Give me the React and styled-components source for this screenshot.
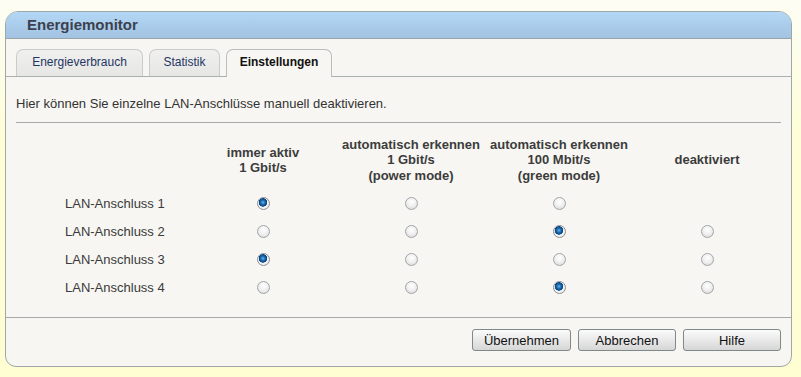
import React from "react";
import styled, { createGlobalStyle } from "styled-components";

const GlobalStyle = createGlobalStyle`
  html, body {
    margin: 0;
    padding: 0;
  }
  body {
    background: linear-gradient(#fdfdf3 0, #fdfdf0 30px, #fffed6 140px, #fffdd2 100%);
    font-family: "Liberation Sans", Arial, sans-serif;
    font-size: 13px;
    color: #333;
  }
`;

const Page = styled.div`
  width: 801px;
  height: 377px;
  box-sizing: border-box;
  padding: 11px 9px 10px 5px;
`;

const Panel = styled.div`
  height: 100%;
  box-sizing: border-box;
  border: 1px solid #9ea8a6;
  border-radius: 13px 13px 11px 11px;
  background: #f7f6f2;
  overflow: hidden;
  display: flex;
  flex-direction: column;
`;

const Header = styled.div`
  height: 26px;
  line-height: 26px;
  padding-left: 21px;
  background: linear-gradient(#b3d7f6, #a2c3e1);
  border-bottom: 1px solid #96a4a8;
  font-size: 15px;
  font-weight: bold;
  color: #3b414e;
`;

const TabBar = styled.div`
  display: flex;
  align-items: flex-end;
  gap: 6px;
  margin-top: 10px;
  height: 27px;
  padding-left: 10px;
  border-bottom: 1px solid #a9b1b0;
`;

const Tab = styled.div`
  width: ${(p) => p.$w}px;
  line-height: 25px;
  box-sizing: border-box;
  text-align: center;
  font-size: 12px;
  border: 1px solid ${(p) => (p.$active ? "#b9bdbc" : "#c9cccb")};
  border-bottom: none;
  border-radius: 7px 7px 0 0;
  margin-bottom: ${(p) => (p.$active ? "-1px" : "0")};
  height: ${(p) => (p.$active ? "28px" : "27px")};
  background: ${(p) => (p.$active ? "#f7f6f2" : "linear-gradient(#f0f0ee, #e6e6e4)")};
  color: ${(p) => (p.$active ? "#111" : "#1f3563")};
  font-weight: ${(p) => (p.$active ? "bold" : "normal")};
`;

const Content = styled.div`
  padding: 0 10px;
  flex: 1;
`;

const Intro = styled.p`
  margin: 20px 0 0;
  line-height: 14px;
  color: #333;
`;

const Rule = styled.div`
  margin-top: 11px;
  border-top: 1px solid #a3aaa9;
`;

const Grid = styled.div`
  display: grid;
  grid-template-columns: 173px repeat(4, 148px);
  grid-template-rows: 58px repeat(4, 28px);
  margin-top: 8px;
  align-items: center;
`;

const ColHead = styled.div`
  text-align: center;
  font-weight: bold;
  line-height: 15.5px;
  color: #3c3c3c;
`;

const RowLabel = styled.div`
  padding-left: 49px;
  color: #3a3a3a;
`;

const Cell = styled.div`
  display: flex;
  justify-content: center;
`;

const Radio = styled.input.attrs({ type: "radio" })`
  appearance: none;
  margin: 0;
  width: 13px;
  height: 13px;
  border-radius: 50%;
  border: 1px solid #a2a5a8;
  box-sizing: border-box;
  background: radial-gradient(circle at 50% 35%, #ffffff 0, #f1f1f1 45%, #d6d6d6 100%);

  &:checked {
    border-color: #8b9196;
    background:
      radial-gradient(circle at 45% 40%, #6fb4ea 0, #1d6fb4 2px, #0b4280 4px, transparent 4.5px),
      radial-gradient(circle, #ffffff 0, #eeeeee 70%, #d2d2d2 100%);
  }
`;

const Footer = styled.div`
  display: flex;
  justify-content: flex-end;
  gap: 7px;
  padding: 11px 10px 15px;
  border-top: 1px solid #a3aaa9;
`;

const Button = styled.button`
  width: ${(p) => p.$w}px;
  height: 22px;
  padding: 0;
  border: 1px solid #7f8988;
  border-radius: 3px;
  background: linear-gradient(#fbfbfb, #e9e9e9 50%, #d6d6d6);
  font-family: "Liberation Sans", Arial, sans-serif;
  font-size: 13px;
  color: #111;
`;

const columns = [
  ["immer aktiv", "1 Gbit/s"],
  ["automatisch erkennen", "1 Gbit/s", "(power mode)"],
  ["automatisch erkennen", "100 Mbit/s", "(green mode)"],
  ["deaktiviert"],
];

const ports = [
  { name: "LAN-Anschluss 1", value: 0, options: [0, 1, 2] },
  { name: "LAN-Anschluss 2", value: 2, options: [0, 1, 2, 3] },
  { name: "LAN-Anschluss 3", value: 0, options: [0, 1, 2, 3] },
  { name: "LAN-Anschluss 4", value: 2, options: [0, 1, 2, 3] },
];

export default function App() {
  return (
    <>
      <GlobalStyle />
      <Page>
        <Panel>
          <Header>Energiemonitor</Header>
          <TabBar>
            <Tab $w={127}>Energieverbrauch</Tab>
            <Tab $w={71}>Statistik</Tab>
            <Tab $w={106} $active>
              Einstellungen
            </Tab>
          </TabBar>
          <Content>
            <Intro>Hier können Sie einzelne LAN-Anschlüsse manuell deaktivieren.</Intro>
            <Rule />
            <Grid>
              <div />
              {columns.map((lines, i) => (
                <ColHead key={i}>
                  {lines.map((l, j) => (
                    <div key={j}>{l}</div>
                  ))}
                </ColHead>
              ))}
              {ports.map((port, r) => (
                <React.Fragment key={port.name}>
                  <RowLabel>{port.name}</RowLabel>
                  {[0, 1, 2, 3].map((c) => (
                    <Cell key={c}>
                      {port.options.includes(c) && (
                        <Radio name={`lan${r}`} defaultChecked={port.value === c} />
                      )}
                    </Cell>
                  ))}
                </React.Fragment>
              ))}
            </Grid>
          </Content>
          <Footer>
            <Button $w={99}>Übernehmen</Button>
            <Button $w={98}>Abbrechen</Button>
            <Button $w={98}>Hilfe</Button>
          </Footer>
        </Panel>
      </Page>
    </>
  );
}
